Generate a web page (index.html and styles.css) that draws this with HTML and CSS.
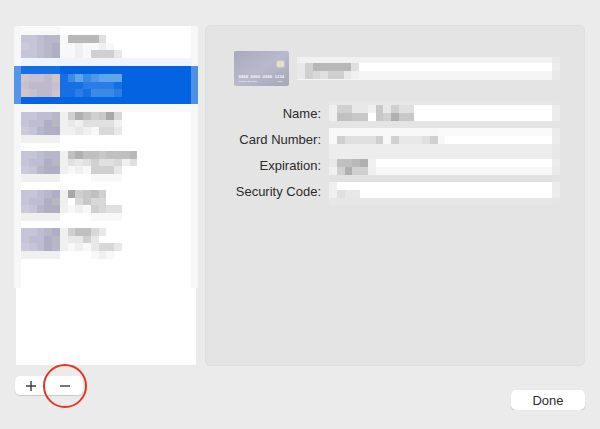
FILE: index.html
```
<!DOCTYPE html>
<html lang="en">

<head>
    <meta charset="UTF-8">
    <meta name="viewport" content="width=device-width, initial-scale=1.0">
    <title>Credit Cards</title>
    <link rel="stylesheet" href="styles.css">
</head>

<body>
    <main class="sheet">
        <div class="sidebar">
            <ul class="cards">
                <li><button class="card" aria-label="Card 1"><svg class="mosaic" data-cells="aaaaa/BBCDDaiiiid/ABCDEaabaaba/BBCDEaabafffc/----------------------"></svg></button></li>
                <li><button class="card selected" aria-label="Card 2" aria-current="true"><svg class="mosaic" data-cells="11111/GHHIG13534555/HIIIH11122221/GHIIG11213332/"></svg></button></li>
                <li><button class="card" aria-label="Card 3"><svg class="mosaic" data-cells="aaaaaaaaaaaaaaaaaaaaaa/BBCCDbfjhfgke/BCCEFbcbddddb/ABDEEbbcbaeec/bbbbb"></svg></button></li>
                <li><button class="card" aria-label="Card 4"><svg class="mosaic" data-cells="/BBCDDbhjhhghhhi/BCCEFbdcdfddebd/ABDEEbabafffc/bbbbb....aaaa"></svg></button></li>
                <li><button class="card" aria-label="Card 5"><svg class="mosaic" data-cells="/BBCDEbkfghf/BCCEFb.egee/ABDEEbabafedd/bbbbb....aaaa"></svg></button></li>
                <li><button class="card" aria-label="Card 6"><svg class="mosaic" data-cells="/BBCDEbfhhec/BCCEFbccfc/ABCEDbabaceec/bbbbb....aba"></svg></button></li>
            </ul>
        </div>

        <form class="details" id="details">
            <div class="title-row">
                <svg class="card-art" viewBox="0 0 55 35">
                    <defs>
                        <linearGradient id="face" x1="0" y1="0" x2="1" y2="1">
                            <stop offset="0" stop-color="#a9a9bd"/>
                            <stop offset="0.5" stop-color="#b9b9ce"/>
                            <stop offset="1" stop-color="#a6a6b8"/>
                        </linearGradient>
                    </defs>
                    <rect width="55" height="35" rx="2" fill="url(#face)"/>
                    <rect x="42.5" y="9.5" width="8" height="7" rx="1.5" fill="#dfdccb" stroke="#c7c4b8" stroke-width="0.7"/>
                    <path d="M45 10v6M48 10v6M43 13h2M48 13h2" stroke="#f0edda" stroke-width="0.6"/>
                    <text x="4.5" y="27" class="art-number">0000 0000 0000 1234</text>
                    <text x="4.5" y="31" class="art-small">YOUR NAME HERE</text>
                    <text x="43.5" y="31" class="art-small">12/20</text>
                </svg>
                <div class="field">
                    <input class="title" type="text" aria-label="Description">
                    <svg class="mosaic title-mosaic" data-cells="cfiiiiid/cfedffcb"></svg>
                </div>
            </div>
            <div class="row">
                <label for="name">Name:</label>
                <div class="field">
                    <input class="name" id="name" type="text">
                    <svg class="mosaic name-mosaic" data-cells="bffccbgcfdd/bhhgg.gfjgg"></svg>
                </div>
            </div>
            <div class="row">
                <label for="number">Card Number:</label>
                <div class="field">
                    <input class="number" id="number" type="text">
                    <svg class="mosaic number-mosaic" data-cells="aaaaaaaaaaaaaa/afddddfafcccdfa"></svg>
                </div>
            </div>
            <div class="row">
                <label for="expiration">Expiration:</label>
                <div class="field">
                    <input class="expiration" id="expiration" type="text">
                    <svg class="mosaic expiration-mosaic" data-cells="chhijb/bfjffb"></svg>
                </div>
            </div>
            <div class="row">
                <label for="code">Security Code:</label>
                <div class="field">
                    <input class="code" id="code" type="text">
                    <svg class="mosaic code-mosaic" data-cells="b/bdcc"></svg>
                </div>
            </div>
        </form>

        <div class="segmented">
            <button class="add" aria-label="Add card">
                <svg width="12" height="12" viewBox="0 0 12 12"><path d="M6 1v10M1 6h10"/></svg>
            </button>
            <button class="remove" aria-label="Remove card">
                <svg width="12" height="12" viewBox="0 0 12 12"><path d="M1 6h10"/></svg>
                <span class="ring"></span>
            </button>
        </div>
        <button class="done" type="submit" form="details">Done</button>
    </main>
    <script>
        const size = 7.75;
        const lilac = {A:'#cccada', B:'#c6c4d9', C:'#bebdd2', D:'#b7b6cb', E:'#afaec4', F:'#b8b7bf', G:'#d0c4cc', H:'#c6c0d0', I:'#beb9cc'};

        // a-k go from light to dark grey, 1-9 are tints on the selected row
        function cellColor(c){
            if (c == '-') return '#edf4fb';
            if (lilac[c]) return lilac[c];
            if (c >= '1' && c <= '9') return `rgba(150,205,245,${c / 8})`;
            const v = 256 - 8 * (c.charCodeAt(0) - 96);
            return `rgb(${v},${v},${v})`;
        }

        document.querySelectorAll('.mosaic').forEach(svg => {
            const rows = svg.dataset.cells.split('/');
            let rects = '';
            rows.forEach((row, y) => {
                [...row].forEach((c, x) => {
                    if (c == '.') return;
                    rects += `<rect x="${x * size}" y="${y * size}" width="${size}" height="${size}" fill="${cellColor(c)}"/>`;
                });
            });
            svg.innerHTML = rects;
        });
    </script>
</body>

</html>
```
FILE: styles.css
```
*{
    box-sizing: border-box;
}
body{
    margin:0;
    background:#ebebeb;
    font-family:"Liberation Sans", Arial, sans-serif;
    font-size:13px;
    color:#2b2b2b;
}
button, input{
    font:inherit;
    color:inherit;
    border:0;
    padding:0;
}
.sheet{
    display:grid;
    grid-template-columns:184px 1fr;
    grid-template-rows:minmax(341px, calc(100vh - 88px)) auto;
    column-gap:7px;
    padding:25px 15px 0 14px;
}

/* card list */
.sidebar{
    margin:1px 0;
    background:linear-gradient(to right, #ebebeb 2px, white 2px, white calc(100% - 2px), #ebebeb calc(100% - 2px));
}
.cards{
    display:grid;
    grid-template-rows:repeat(6, minmax(0, 1fr));
    list-style:none;
    margin:0;
    height:262px;
    padding:1px 0 29px;
    border-radius:3px 3px 0 0;
    background:linear-gradient(to right, #f7f7f7 7px, white 7px, white calc(100% - 7px), #f7f7f7 calc(100% - 7px));
}
.cards li{
    display:grid;
}
.card{
    display:flex;
    align-items:flex-start;
    padding-left:7px;
    background:none;
}
.selected{
    background:linear-gradient(to right, #5494e9 7px, #0463e1 7px, #0463e1 calc(100% - 7px), #5090e3 calc(100% - 7px));
}
.mosaic{
    display:block;
    width:178px;
    height:39px;
    shape-rendering:crispEdges;
    pointer-events:none;
}
.card .mosaic{
    width:170px;
    height:38px;
    overflow:visible;
}

/* details */
.details{
    padding:25px 24px 25px 28px;
    border:1px solid #dfdfdf;
    border-radius:5px;
    background:#e4e4e4;
}
.title-row{
    display:flex;
    align-items:center;
    gap:8px;
    margin-bottom:15px;
}
.card-art{
    width:55px;
    height:35px;
}
.art-number{
    font-family:"DejaVu Sans Mono", monospace;
    font-size:4px;
    font-weight:700;
    fill:#f4f4f8;
}
.art-small{
    font-size:2px;
    font-weight:700;
    fill:#f4f4f8;
}
.row{
    display:grid;
    grid-template-columns:87px 1fr;
    column-gap:8px;
}
.row label{
    line-height:26px;
    text-align:right;
    white-space:nowrap;
}
.field{
    display:grid;
    flex:1;
}
.field > *{
    grid-area:1 / 1;
}
.field input{
    width:100%;
    height:26px;
    padding:0 8px;
    border-right:8px solid rgba(228, 228, 228, 0.7);
    border-radius:0;
    background-color:transparent;
    background-origin:border-box;
}
.field .title{
    height:23px;
    background-image:linear-gradient(#f1f1f1 6px, white 6px, white 14px, #f5f5f5 14px);
}
.field .name{
    background-image:linear-gradient(#e7e7e7 4px, white 4px, white 20px, #e4e4e4 20px);
}
.field .number{
    background-image:linear-gradient(#e4e4e4 1px, #fafafa 1px, #fafafa 9px, white 9px, white 17px, #ededed 17px);
}
.field .expiration{
    background-image:linear-gradient(#ededed 6px, white 6px, white 14px, #f8f8f8 14px, #f8f8f8 22px, #e2e2e2 22px);
}
.field .code{
    background-image:linear-gradient(#e1e1e1 3px, white 3px, white 19px, #e7e7e7 19px);
}
.field .mosaic{
    height:16px;
}
.title-mosaic{
    margin-top:6px;
}
.name-mosaic{
    margin-top:4px;
}
.number-mosaic{
    margin-top:1px;
}
.expiration-mosaic{
    margin-top:6px;
}
.code-mosaic{
    margin-top:3px;
}

/* bottom buttons */
.segmented{
    display:flex;
    justify-self:start;
    align-self:start;
    margin:10px 0 0 1px;
    border-radius:5px;
    background:white;
    box-shadow:0 1px 1px rgba(0, 0, 0, 0.15);
}
.segmented button{
    display:flex;
    align-items:center;
    justify-content:center;
    position:relative;
    height:19px;
    background:none;
}
.segmented path{
    stroke:#3c3c3c;
    stroke-width:1.4;
}
.add{
    width:32px;
}
.remove{
    width:36px;
}
.ring{
    position:absolute;
    top:50%;
    left:50%;
    width:44px;
    height:44px;
    margin:-22px;
    border:2px solid #e8341c;
    border-radius:50%;
}
.done{
    justify-self:end;
    width:74px;
    height:20px;
    margin-top:24px;
    border-radius:5px;
    background:white;
    box-shadow:0 1px 1px rgba(0, 0, 0, 0.2);
}
```
